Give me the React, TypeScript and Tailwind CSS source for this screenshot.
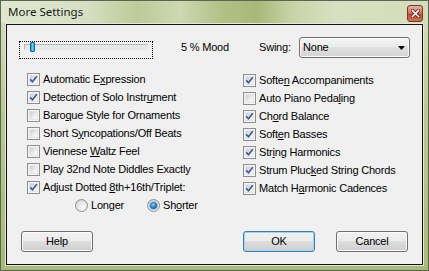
import React from "react";

const F = { fontFamily: '"Liberation Sans", Arial, sans-serif' };

function Box({ checked }: { checked?: boolean }) {
  return (
    <span className="w-[13px] h-[13px] border border-[#8f8f8f] bg-[#f4f4f4] p-[1px] flex shrink-0">
      <span className="flex-1 relative bg-[linear-gradient(135deg,#c9ccd1,#eceef0_60%,#fafafa)] border border-[#e6e6e6]">
        {checked && (
          <svg className="absolute -left-[1px] -top-[1px]" width="9" height="9" viewBox="0 0 9 9">
            <path d="M1.2 4.3 L3.5 6.8 L7.8 1.2" fill="none" stroke="#3c5aa0" strokeWidth="1.7" />
          </svg>
        )}
      </span>
    </span>
  );
}

function Radio({ checked }: { checked?: boolean }) {
  return (
    <span className="w-[13px] h-[13px] rounded-full border border-[#8f8f8f] bg-[radial-gradient(circle_at_65%_70%,#fbfbfb,#e4e4e4_55%,#c8cacd)] flex items-center justify-center shrink-0">
      {checked && (
        <span className="w-[7px] h-[7px] rounded-full bg-[radial-gradient(circle_at_45%_40%,#8fd3f7,#1c6fb8_55%,#0b3d78)] shadow-[0_0_0_1px_#9fc3e0]" />
      )}
    </span>
  );
}

function Item({ checked, children }: { checked?: boolean; children: React.ReactNode }) {
  return (
    <div className="h-[18px] flex items-center">
      <Box checked={checked} />
      <span className="ml-[3px] whitespace-nowrap">{children}</span>
    </div>
  );
}

function Btn({ children, def }: { children: React.ReactNode; def?: boolean }) {
  return (
    <div
      className={
        "w-[72px] h-[21px] rounded-[3px] border flex items-center justify-center bg-[linear-gradient(#f2f2f2,#ebebeb_45%,#dddddd_50%,#cfcfcf)] " +
        (def
          ? "border-[#3c7fb1] shadow-[inset_0_0_0_1px_#9fd6f3]"
          : "border-[#707070] shadow-[inset_0_0_0_1px_#fbfbfb]")
      }
    >
      {children}
    </div>
  );
}

export default function App() {
  return (
    <div
      className="w-[429px] h-[271px] flex flex-col border border-[#5b6650] bg-[linear-gradient(#d8e1c3,#b9c994_40%,#a8ba78)] text-[11px] text-black tracking-[-0.2px]"
      style={F}
    >
      <div className="h-[22px] flex items-center pl-[7px] pr-[5px] bg-[linear-gradient(90deg,#e0e7d0_0%,#d6dfc2_20%,#bccb98_32%,#cdd8b1_42%,#b0c185_52%,#a6b97a_60%,#c7d3a6_68%,#d7e0c1_78%,#d3ddb9_100%)]">
        <span className="text-[11.5px] tracking-normal text-[#1a1a1a] flex-1" style={{ fontFamily: '"Noto Sans", "Open Sans", sans-serif' }}>
          More Settings
        </span>
        <div className="w-[16px] h-[17px] mt-[3px] rounded-[3px] border border-[#6b3b2f] bg-[linear-gradient(#eab0a2,#d9775f_45%,#c5472c_55%,#d9714f)] flex items-center justify-center">
          <svg width="9" height="9" viewBox="0 0 9 9">
            <path d="M1.5 1.5 L7.5 7.5 M7.5 1.5 L1.5 7.5" stroke="#4a2a22" strokeWidth="3.2" strokeLinecap="square" />
            <path d="M1.5 1.5 L7.5 7.5 M7.5 1.5 L1.5 7.5" stroke="#ffffff" strokeWidth="1.6" strokeLinecap="square" />
          </svg>
        </div>
      </div>
      <div className="flex-1 mx-[5px] mt-[1px] mb-[5px] border border-[#111] bg-[#f0f0f0] shadow-[0_0_0_1px_#e3e9d4] flex flex-col">
        <div className="mt-[12px] h-[21px] flex items-start">
          <div className="ml-[12px] mt-[4px] w-[134px] h-[18px] border border-dotted border-black flex items-start">
            <div className="ml-[4px] mt-[2px] w-[124px] h-[6px] relative border border-[#b5b8b8] border-b-[#e6e6e6] border-r-[#e6e6e6] bg-[#e6e9e9]">
              <div className="absolute left-[5px] -top-[3px] w-[5px] h-[10px] rounded-[1px] border border-[#1b5f93] bg-[linear-gradient(90deg,#2a8fd0,#5fd2fb,#2aa6e4)]" />
            </div>
          </div>
          <span className="ml-[28px] w-[78px] h-[21px] flex items-center">5 % Mood</span>
          <span className="w-[40px] h-[21px] flex items-center">Swing:</span>
          <div className="w-[111px] h-[21px] rounded-[3px] border border-[#707070] bg-[linear-gradient(#f4f4f4,#ececec_45%,#e0e0e0_50%,#d4d4d4)] shadow-[inset_0_0_0_1px_#fafafa] flex items-center pl-[3px] pr-[4px]">
            <span className="flex-1">None</span>
            <svg width="7" height="4" viewBox="0 0 7 4">
              <path d="M0 0 H7 L3.5 4 Z" fill="#000" />
            </svg>
          </div>
        </div>
        <div className="flex mt-[12px]">
          <div className="ml-[20px] w-[216px] flex flex-col">
            <Item checked>Automatic E<u>x</u>pression</Item>
            <Item checked>Detection of Solo Instr<u>u</u>ment</Item>
            <Item>Baro<u>q</u>ue Style for Ornaments</Item>
            <Item>Short S<u>y</u>ncopations/Off Beats</Item>
            <Item>Viennese <u>W</u>altz Feel</Item>
            <Item>Play 32nd Note Diddles Exactly</Item>
            <Item checked>Adjust Dotted <u>8</u>th+16th/Triplet:</Item>
            <div className="h-[18px] flex items-center ml-[48px]">
              <Radio />
              <span className="ml-[3px] w-[56px]">Longer</span>
              <Radio checked />
              <span className="ml-[3px]">Sh<u>o</u>rter</span>
            </div>
          </div>
          <div className="mt-[1px] flex flex-col">
            <Item checked>Softe<u>n</u> Accompaniments</Item>
            <Item>Auto Piano Peda<u>l</u>ing</Item>
            <Item checked>Ch<u>o</u>rd Balance</Item>
            <Item checked>Soft<u>e</u>n Basses</Item>
            <Item checked>Str<u>i</u>ng Harmonics</Item>
            <Item checked>Strum Pluc<u>k</u>ed String Chords</Item>
            <Item checked>Match H<u>a</u>rmonic Cadences</Item>
          </div>
        </div>
        <div className="mt-[17px] flex">
          <div className="ml-[14px]">
            <Btn>Help</Btn>
          </div>
          <div className="ml-[150px]">
            <Btn def>OK</Btn>
          </div>
          <div className="ml-[21px]">
            <Btn>Cancel</Btn>
          </div>
        </div>
      </div>
    </div>
  );
}
